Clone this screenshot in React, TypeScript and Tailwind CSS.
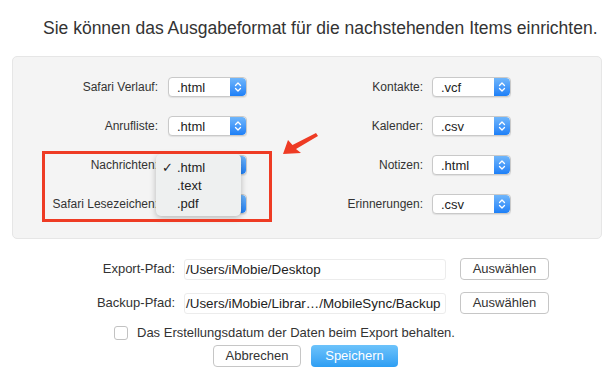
import React from 'react'

const font = { fontFamily: '"Liberation Sans", Arial, sans-serif' }

function Stepper() {
  return (
    <div className="w-[16px] h-full rounded-r-[4px] bg-gradient-to-b from-[#6fb6fb] to-[#1b7ff7] flex items-center justify-center">
      <svg width="10" height="14" viewBox="0 0 10 14" fill="none">
        <path d="M2.5 5.5 L5 3 L7.5 5.5" stroke="white" strokeWidth="1.3" strokeLinecap="round" strokeLinejoin="round" />
        <path d="M2.5 8.5 L5 11 L7.5 8.5" stroke="white" strokeWidth="1.3" strokeLinecap="round" strokeLinejoin="round" />
      </svg>
    </div>
  )
}

function Select({ value }: { value: string }) {
  return (
    <div className="w-[79px] h-[20px] flex bg-white border border-[#c9c9c9] rounded-[4px] shadow-[0_1px_1px_rgba(0,0,0,0.08)] overflow-hidden">
      <div className="flex-1 pl-[8px] text-[13px] leading-[19px] text-[#222]">{value}</div>
      <Stepper />
    </div>
  )
}

function Row({ label, value, labelWidth, gap }: { label: string; value: string; labelWidth: string; gap: string }) {
  return (
    <div className={`flex items-center h-[20px] ${gap}`}>
      <div className={`${labelWidth} text-right text-[12px] text-[#333] whitespace-nowrap`}>{label}</div>
      <Select value={value} />
    </div>
  )
}

function PathRow({ label, path }: { label: string; path: string }) {
  return (
    <div className="flex items-center h-[22px]">
      <div className="w-[175px] text-right text-[13px] text-[#333]">{label}</div>
      <div className="ml-[9px] w-[262px] h-[21px] bg-white border border-[#ececec] rounded-[3px] pl-[1px] text-[13.4px] leading-[19px] text-[#222] whitespace-nowrap overflow-hidden">
        {path}
      </div>
      <button className="ml-[14px] w-[89px] h-[22px] bg-white border border-[#c6c6c6] rounded-[4px] text-[13px] text-[#333]">
        Auswählen
      </button>
    </div>
  )
}

export default function App() {
  return (
    <div className="relative w-[613px] h-[387px] bg-white overflow-hidden" style={font}>
      <div className="pt-[17px] pl-[43px] text-[17.5px] leading-[22px] text-[#333] whitespace-nowrap">
        Sie können das Ausgabeformat für die nachstehenden Items einrichten.
      </div>

      {/* Format panel */}
      <div className="mt-[17px] ml-[12px] w-[590px] h-[183px] bg-[#f4f4f4] border border-[#e6e6e6] rounded-[5px] flex pt-[20px]">
        <div className="flex flex-col gap-[19px]">
          <Row label="Safari Verlauf:" value=".html" labelWidth="w-[145px]" gap="gap-[10px]" />
          <Row label="Anrufliste:" value=".html" labelWidth="w-[145px]" gap="gap-[10px]" />
          <Row label="Nachrichten:" value=".html" labelWidth="w-[145px]" gap="gap-[10px]" />
          <Row label="Safari Lesezeichen:" value=".html" labelWidth="w-[145px]" gap="gap-[10px]" />
        </div>
        <div className="ml-[76px] flex flex-col gap-[19px]">
          <Row label="Kontakte:" value=".vcf" labelWidth="w-[100px]" gap="gap-[9px]" />
          <Row label="Kalender:" value=".csv" labelWidth="w-[100px]" gap="gap-[9px]" />
          <Row label="Notizen:" value=".html" labelWidth="w-[100px]" gap="gap-[9px]" />
          <Row label="Erinnerungen:" value=".csv" labelWidth="w-[100px]" gap="gap-[9px]" />
        </div>
      </div>

      {/* Paths */}
      <div className="mt-[19px] flex flex-col gap-[12px]">
        <PathRow label="Export-Pfad:" path="/Users/iMobie/Desktop" />
        <PathRow label="Backup-Pfad:" path="/Users/iMobie/Librar…/MobileSync/Backup" />
      </div>

      <div className="mt-[11px] ml-[114px] flex items-center h-[16px]">
        <div className="w-[14px] h-[14px] bg-white border border-[#c2c2c2] rounded-[3px]" />
        <span className="ml-[9px] text-[13px] text-[#333] whitespace-nowrap">
          Das Erstellungsdatum der Daten beim Export behalten.
        </span>
      </div>

      <div className="mt-[4px] ml-[213px] flex gap-[10px]">
        <button className="w-[88px] h-[22px] bg-white border border-[#c6c6c6] rounded-[4px] text-[13px] text-[#333]">
          Abbrechen
        </button>
        <button className="w-[87px] h-[22px] rounded-[4px] bg-gradient-to-b from-[#6cc3fb] to-[#2c9ef3] text-[13px] text-white">
          Speichern
        </button>
      </div>

      {/* Popup menu */}
      <div className="absolute left-[156px] top-[154px] w-[85px] h-[62px] bg-[#eef0f0] rounded-[5px] shadow-[0_2px_6px_rgba(0,0,0,0.25)] pt-[5px] text-[13px] text-[#222]">
        <div className="h-[18px] leading-[18px] flex">
          <span className="w-[21px] pl-[6px]">✓</span>
          <span>.html</span>
        </div>
        <div className="h-[18px] leading-[18px] pl-[21px]">.text</div>
        <div className="h-[18px] leading-[18px] pl-[21px]">.pdf</div>
      </div>

      {/* Highlight box */}
      <div className="absolute left-[42px] top-[151px] w-[230px] h-[71px] border-[3px] border-[#ee3b24]" />

      {/* Arrow */}
      <svg className="absolute left-[278px] top-[128px]" width="42" height="32" viewBox="0 0 42 32">
        <path d="M5 26 L10 12 L14.5 17 L38 5 L40 8 L18 21 L23 25 Z" fill="#ee3b24" />
      </svg>
    </div>
  )
}
